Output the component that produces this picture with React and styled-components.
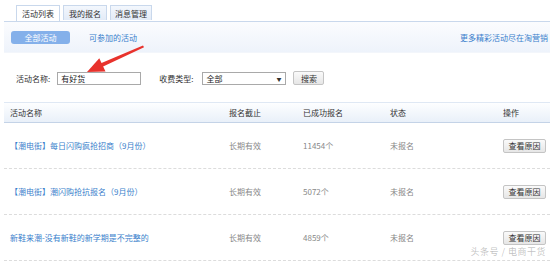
import React from "react";
import styled, { createGlobalStyle } from "styled-components";

const Global = createGlobalStyle`
  html, body { margin: 0; padding: 0; background: #fff; }
  body { font-family: "Noto Sans CJK SC", "Noto Sans", sans-serif; font-size: 8px; color: #333; }
`;

const Page = styled.div`
  position: relative;
  width: 546px;
  height: 262px;
  margin-left: 4px;
  overflow: hidden;
`;

const TabBar = styled.div`
  display: flex;
  gap: 3px;
  padding: 5px 0 0 12px;
  height: 16px;
  border-bottom: 1px solid #c9d8ec;
`;

const Tab = styled.div`
  display: flex;
  align-items: center;
  justify-content: center;
  width: ${(p) => p.$w}px;
  height: 15px;
  box-sizing: border-box;
  border: 1px solid #c9d8ec;
  border-bottom: none;
  background: ${(p) => (p.$active ? "#fff" : "linear-gradient(#f3f7fd, #e3ebf7)")};
  color: #333;
  font-size: 8px;
  margin-bottom: ${(p) => (p.$active ? "-1px" : "0")};
  height: ${(p) => (p.$active ? "16px" : "15px")};
`;

const SubBar = styled.div`
  display: flex;
  align-items: center;
  height: 30px;
  padding: 0 2px 0 7px;
  background: linear-gradient(#fbfcfe, #eef3fb);
  border-bottom: 1px solid #f3f6fb;
`;

const PillButton = styled.div`
  width: 59px;
  height: 13px;
  border-radius: 3px;
  background: #84b0ea;
  color: #fff;
  display: flex;
  align-items: center;
  justify-content: center;
  font-size: 8px;
`;

const Link = styled.a`
  color: #3a7fcc;
  text-decoration: none;
  font-size: 8px;
  margin-left: ${(p) => p.$ml || 0}px;
`;

const Spacer = styled.div`
  flex: 1;
`;

const FormRow = styled.div`
  display: flex;
  align-items: center;
  height: 14px;
  margin-top: 18px;
  padding-left: 12px;
`;

const Label = styled.span`
  color: #333;
  font-size: 8px;
  margin-right: ${(p) => p.$mr}px;
`;

const Input = styled.div`
  width: 84px;
  height: 13px;
  box-sizing: border-box;
  border: 1px solid #a9a9a9;
  padding-left: 3px;
  display: flex;
  align-items: center;
  color: #222;
  font-size: 8px;
  margin-right: ${(p) => p.$mr}px;
`;

const Select = styled(Input)`
  justify-content: space-between;
  padding-right: 4px;
  width: 84px;
  margin-right: 7px;
`;

const Caret = styled.span`
  font-size: 5px;
  color: #333;
`;

const GrayButton = styled.div`
  width: ${(p) => p.$w}px;
  height: 14px;
  box-sizing: border-box;
  border: 1px solid #c4c4c4;
  border-radius: 2px;
  background: linear-gradient(#fafafa, #e6e6e6);
  display: flex;
  align-items: center;
  justify-content: center;
  color: #333;
  font-size: 8px;
`;

const Table = styled.div`
  margin-top: 17px;
`;

const Cols = styled.div`
  display: grid;
  grid-template-columns: 219px 74px 87px 113px 1fr;
  align-items: center;
  padding-left: 6px;
`;

const HeaderRow = styled(Cols)`
  height: 19px;
  border-top: 1px solid #dfe8f4;
  border-bottom: 1px solid #c4d3e7;
  background: linear-gradient(#fdfeff, #e9f0f9);
  color: #333;
`;

const Row = styled(Cols)`
  height: 45px;
  border-bottom: 1px dashed #dcdcdc;
  margin-left: 0;
  color: #888;
`;

const NameLink = styled.a`
  color: #3a7fcc;
  text-decoration: none;
`;

const Cell = styled.div`
  white-space: nowrap;
`;

const ArrowSvg = styled.svg`
  position: absolute;
  left: 0;
  top: 0;
  pointer-events: none;
`;

const Watermark = styled.div`
  position: absolute;
  right: 4px;
  bottom: 4px;
  color: rgba(120, 120, 120, 0.45);
  font-size: 9px;
  letter-spacing: 0.5px;
`;

const rows = [
  { name: "【潮电街】每日闪购疯抢招商（9月份）", deadline: "长期有效", count: "11454个", status: "未报名" },
  { name: "【潮电街】潮闪购抢抗报名（9月份）", deadline: "长期有效", count: "5072个", status: "未报名" },
  { name: "新鞋来潮-没有新鞋的新学期是不完整的", deadline: "长期有效", count: "4859个", status: "未报名" },
];

export default function App() {
  return (
    <>
      <Global />
      <Page>
        <TabBar>
          <Tab $w={44} $active>活动列表</Tab>
          <Tab $w={44}>我的报名</Tab>
          <Tab $w={42}>消息管理</Tab>
        </TabBar>
        <SubBar>
          <PillButton>全部活动</PillButton>
          <Link $ml={19}>可参加的活动</Link>
          <Spacer />
          <Link>更多精彩活动尽在淘营销</Link>
        </SubBar>
        <FormRow>
          <Label $mr={7}>活动名称:</Label>
          <Input $mr={18}>有好货</Input>
          <Label $mr={9}>收费类型:</Label>
          <Select>
            全部
            <Caret>▼</Caret>
          </Select>
          <GrayButton $w={31}>搜索</GrayButton>
        </FormRow>
        <Table>
          <HeaderRow>
            <Cell>活动名称</Cell>
            <Cell>报名截止</Cell>
            <Cell>已成功报名</Cell>
            <Cell>状态</Cell>
            <Cell>操作</Cell>
          </HeaderRow>
          {rows.map((r, i) => (
            <Row key={i}>
              <Cell>
                <NameLink>{r.name}</NameLink>
              </Cell>
              <Cell>{r.deadline}</Cell>
              <Cell>{r.count}</Cell>
              <Cell>{r.status}</Cell>
              <Cell>
                <GrayButton $w={43}>查看原因</GrayButton>
              </Cell>
            </Row>
          ))}
        </Table>
        <ArrowSvg width="546" height="262" viewBox="4 0 546 262">
          <polygon points="143,45.5 144,47.3 101.5,67.3 100.3,63.4" fill="#e8322c" />
          <polygon points="87,72 99.3,58.2 105.5,71.4" fill="#e8322c" />
        </ArrowSvg>
        <Watermark>头条号 / 电商干货</Watermark>
      </Page>
    </>
  );
}
